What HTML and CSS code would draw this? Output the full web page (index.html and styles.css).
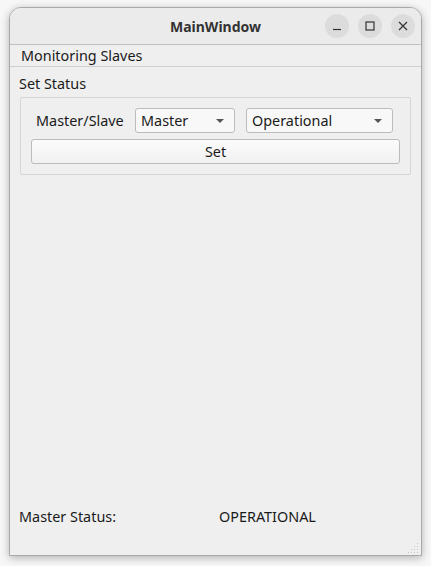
FILE: index.html
```html
<!DOCTYPE html>
<html>
<head>
<meta charset="utf-8">
<link rel="stylesheet" href="styles.css">
</head>
<body>
<div class="window">
  <div class="titlebar">
    <div class="title">MainWindow</div>
    <div class="controls">
      <div class="ctl"><svg width="10" height="10" viewBox="0 0 10 10"><path d="M1 8.5H9" stroke="#333" stroke-width="1.2"/></svg></div>
      <div class="ctl"><svg width="10" height="10" viewBox="0 0 10 10"><rect x="1" y="1" width="8" height="8" fill="none" stroke="#333" stroke-width="1.2"/></svg></div>
      <div class="ctl"><svg width="10" height="10" viewBox="0 0 10 10"><path d="M1 1L9 9M9 1L1 9" stroke="#333" stroke-width="1.2"/></svg></div>
    </div>
  </div>
  <div class="menubar"><span class="menuitem">Monitoring Slaves</span></div>
  <div class="central">
    <div class="grouptitle">Set Status</div>
    <div class="groupbox">
      <div class="row">
        <span class="label">Master/Slave</span>
        <div class="combo combo-a"><span>Master</span><span class="arrow"></span></div>
        <div class="combo combo-b"><span>Operational</span><span class="arrow"></span></div>
      </div>
      <div class="button">Set</div>
    </div>
    <div class="spacer"></div>
    <div class="status">
      <span class="status-label">Master Status:</span>
      <span class="status-value">OPERATIONAL</span>
    </div>
  </div>
  <div class="grip">
    <svg width="12" height="12" viewBox="0 0 12 12">
      <g fill="#c4c4c4">
        <rect x="9" y="1" width="1" height="1"/>
        <rect x="9" y="4" width="1" height="1"/><rect x="6" y="4" width="1" height="1"/>
        <rect x="9" y="7" width="1" height="1"/><rect x="6" y="7" width="1" height="1"/><rect x="3" y="7" width="1" height="1"/>
        <rect x="9" y="10" width="1" height="1"/><rect x="6" y="10" width="1" height="1"/><rect x="3" y="10" width="1" height="1"/><rect x="0" y="10" width="1" height="1"/>
      </g>
    </svg>
  </div>
</div>
</body>
</html>
```
FILE: styles.css
```css
html, body {
  margin: 0;
  padding: 0;
}
body {
  width: 431px;
  height: 566px;
  background: #f7f7f7;
  font-family: "Noto Sans", "DejaVu Sans", sans-serif;
  font-size: 14.4px;
  color: #1a1a1a;
  overflow: hidden;
  padding-top: 7px;
  padding-left: 9px;
  box-sizing: border-box;
}
.window {
  position: relative;
  width: 413px;
  height: 549px;
  box-sizing: border-box;
  border: 1px solid #a9a9a9;
  border-radius: 12px 12px 0 0;
  background: #efefef;
  box-shadow: 0 2px 9px rgba(0,0,0,0.28);
  display: flex;
  flex-direction: column;
}
.titlebar {
  height: 36px;
  flex: none;
  background: #ebebeb;
  border-radius: 11px 11px 0 0;
  border-bottom: 1px solid #c0c0c0;
  display: flex;
  align-items: center;
  justify-content: center;
  position: relative;
}
.title {
  font-weight: bold;
  font-size: 14px;
  color: #333;
}
.controls {
  position: absolute;
  right: 6px;
  top: 6px;
  display: flex;
  gap: 9px;
}
.ctl {
  width: 24px;
  height: 24px;
  border-radius: 50%;
  background: #dcdcdc;
  display: flex;
  align-items: center;
  justify-content: center;
}
.menubar {
  height: 21px;
  flex: none;
  border-bottom: 1px solid #cfcfcf;
  display: flex;
  align-items: center;
  padding-left: 11px;
}
.central {
  flex: 1;
  display: flex;
  flex-direction: column;
  padding: 7px 10px 0 9px;
}
.grouptitle {
  height: 23px;
  line-height: 20px;
}
.groupbox {
  margin-left: 1px;
  height: 78px;
  box-sizing: border-box;
  border: 1px solid #d6d6d6;
  border-radius: 2px;
  padding: 10px 10px 0 10px;
  display: flex;
  flex-direction: column;
  gap: 6px;
}
.row {
  display: flex;
  align-items: center;
  height: 25px;
}
.label {
  margin-left: 5px;
  width: 99px;
}
.combo {
  height: 25px;
  box-sizing: border-box;
  border: 1px solid #bcbcbc;
  border-radius: 3px;
  background: #f8f8f8;
  display: flex;
  align-items: center;
  justify-content: space-between;
  padding: 0 10px 0 5px;
}
.combo-a { width: 100px; }
.combo-b { width: 147px; margin-left: 11px; }
.arrow {
  width: 0;
  height: 0;
  border-left: 4px solid transparent;
  border-right: 4px solid transparent;
  border-top: 4px solid #555;
}
.button {
  height: 25px;
  box-sizing: border-box;
  border: 1px solid #bcbcbc;
  border-radius: 3px;
  background: linear-gradient(#fbfbfb, #f1f1f1);
  display: flex;
  align-items: center;
  justify-content: center;
}
.spacer { flex: 1; }
.status {
  display: flex;
  height: 20px;
  align-items: center;
  margin-bottom: 29px;
}
.status-label { width: 200px; }
.grip {
  position: absolute;
  right: 1px;
  bottom: 1px;
  line-height: 0;
}
```
